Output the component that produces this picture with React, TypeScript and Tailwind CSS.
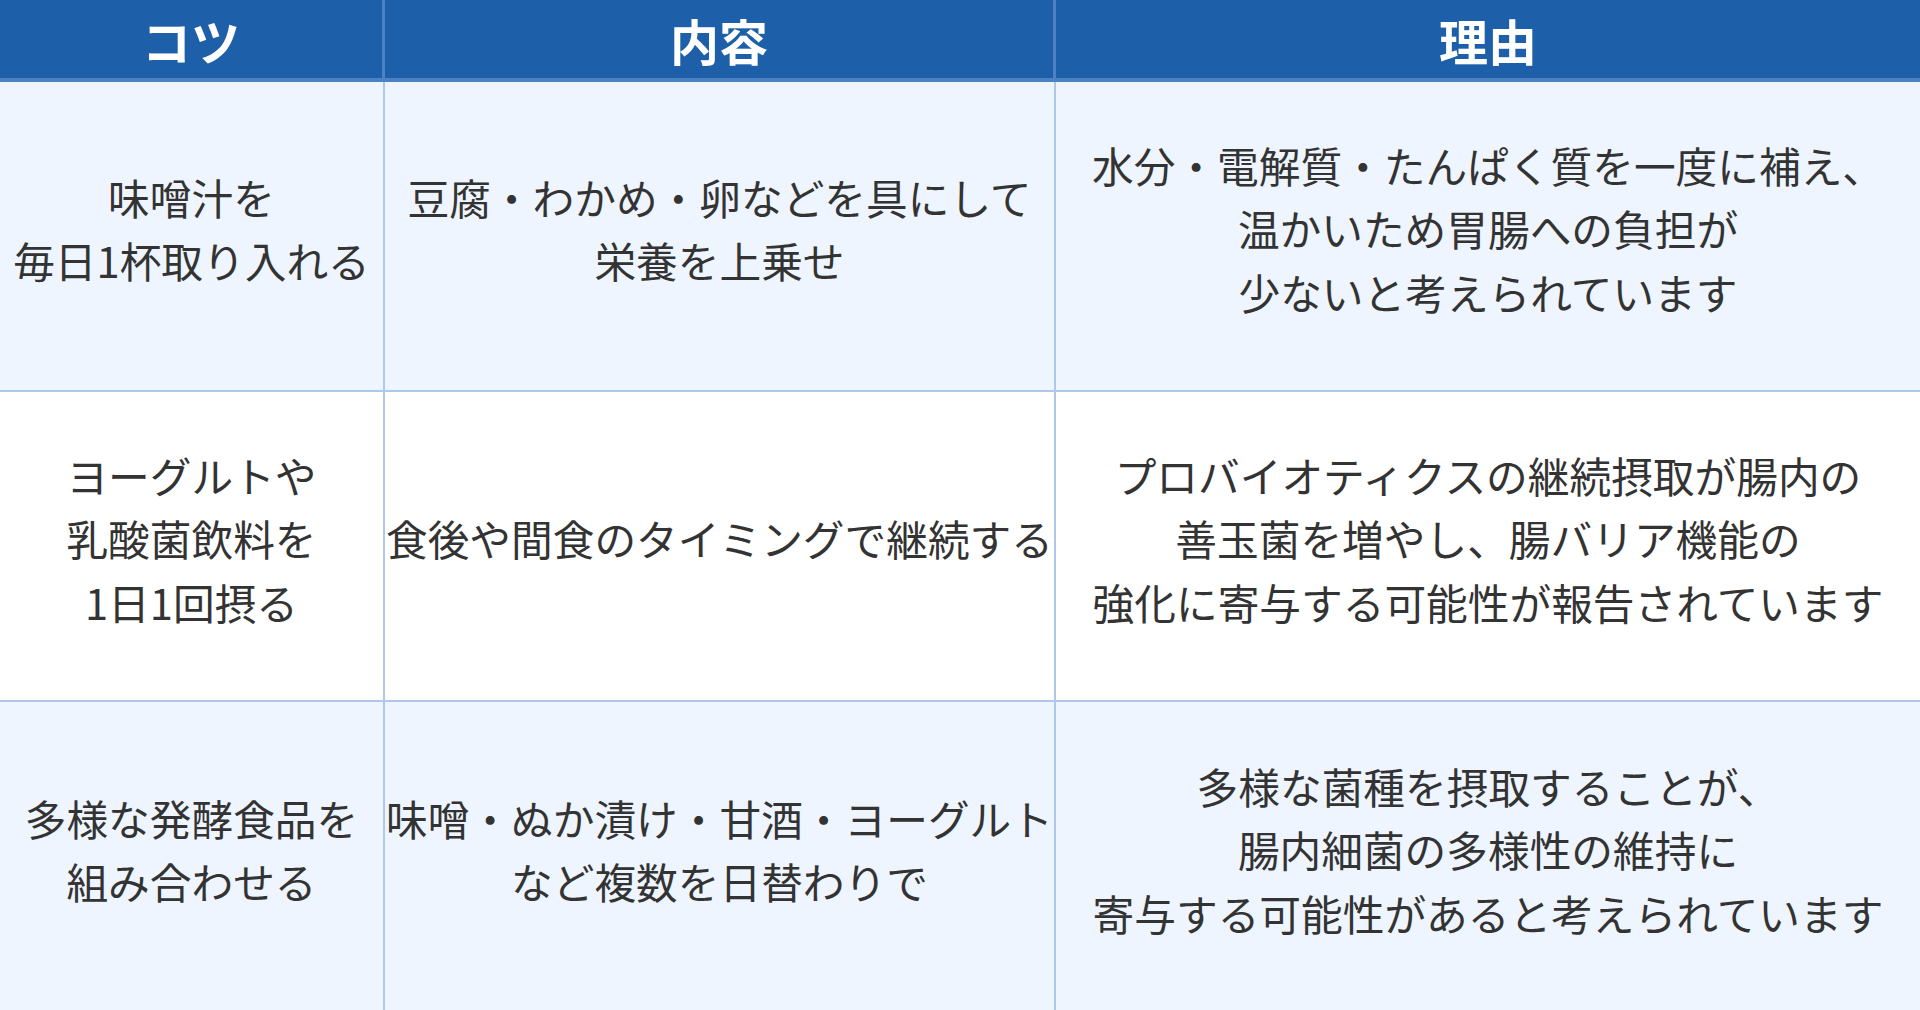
import React from "react";

const rows: { a: string[]; b: string[]; c: string[]; bg: string }[] = [
  {
    a: ["味噌汁を", "毎日1杯取り入れる"],
    b: ["豆腐・わかめ・卵などを具にして", "栄養を上乗せ"],
    c: ["水分・電解質・たんぱく質を一度に補え、", "温かいため胃腸への負担が", "少ないと考えられています"],
    bg: "bg-[#eef5fe]",
  },
  {
    a: ["ヨーグルトや", "乳酸菌飲料を", "1日1回摂る"],
    b: ["食後や間食のタイミングで継続する"],
    c: ["プロバイオティクスの継続摂取が腸内の", "善玉菌を増やし、腸バリア機能の", "強化に寄与する可能性が報告されています"],
    bg: "bg-white",
  },
  {
    a: ["多様な発酵食品を", "組み合わせる"],
    b: ["味噌・ぬか漬け・甘酒・ヨーグルト", "など複数を日替わりで"],
    c: ["多様な菌種を摂取することが、", "腸内細菌の多様性の維持に", "寄与する可能性があると考えられています"],
    bg: "bg-[#eef5fe]",
  },
];

function Lines({ lines }: { lines: string[] }) {
  return (
    <>
      {lines.map((l, i) => (
        <span key={i} className="block whitespace-nowrap">
          {l}
        </span>
      ))}
    </>
  );
}

export default function App() {
  return (
    <div
      className="w-[1920px] h-[1010px] overflow-hidden flex flex-col bg-white"
      style={{ fontFamily: '"Noto Sans CJK JP", "Noto Sans", sans-serif' }}
    >
      <div className="flex h-[82px] shrink-0 bg-[#1d5fa8] border-b-4 border-[#4d82c2] text-white font-bold text-[49px] leading-none">
        <div className="w-[385px] shrink-0 flex items-center justify-center border-r-[3px] border-[#4d82c2]">コツ</div>
        <div className="w-[671px] shrink-0 flex items-center justify-center border-r-[3px] border-[#4d82c2]">内容</div>
        <div className="flex-1 flex items-center justify-center">理由</div>
      </div>
      {rows.map((r, i) => (
        <div
          key={i}
          className={`flex h-[310px] shrink-0 ${r.bg} ${i < 2 ? "border-b-2 border-[#adc8ea]" : ""} text-[#333333] text-[41.7px] leading-[63.5px]`}
        >
          <div className="w-[385px] shrink-0 flex items-center justify-center text-center border-r-2 border-[#adc8ea] px-1 pb-[14px]">
            <div>
              <Lines lines={r.a} />
            </div>
          </div>
          <div className="w-[671px] shrink-0 flex items-center justify-center text-center border-r-2 border-[#adc8ea] px-1 pb-[14px]">
            <div>
              <Lines lines={r.b} />
            </div>
          </div>
          <div className="flex-1 flex items-center justify-center text-center px-1 pb-[14px]">
            <div>
              <Lines lines={r.c} />
            </div>
          </div>
        </div>
      ))}
    </div>
  );
}
